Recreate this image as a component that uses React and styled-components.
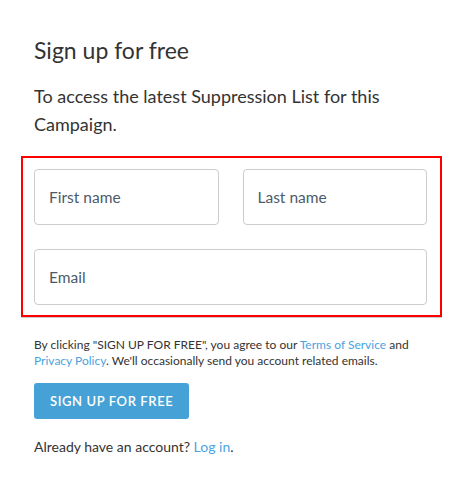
import React from "react";
import styled, { createGlobalStyle } from "styled-components";

const GlobalStyle = createGlobalStyle`
  body {
    margin: 0;
    background: #fff;
    font-family: "Source Sans Pro", Lato, "Liberation Sans", sans-serif;
    color: #333;
  }
`;

const Page = styled.div`
  width: 393px;
  padding: 35px 37px 30px 34px;
`;

const Title = styled.h1`
  margin: 0;
  font-size: 23px;
  font-weight: 400;
  line-height: 30px;
  color: #333;
`;

const Intro = styled.p`
  margin: 17px 0 0;
  font-size: 18px;
  line-height: 28px;
  color: #333;
`;

const FormBox = styled.div`
  margin: 18px -15px 0 -13px;
  padding: 11px 13px 10px 11px;
  border: 2px solid #ff0000;
  box-shadow: 0 1px 0 #ccc;
  display: flex;
  flex-direction: column;
  gap: 24px;
`;

const Row = styled.div`
  display: flex;
  gap: 24px;
`;

const Input = styled.input`
  flex: ${(p) => (p.$grow ? 1 : "none")};
  width: 100%;
  min-width: 0;
  height: 56px;
  box-sizing: border-box;
  padding: 0 14px;
  border: 1px solid #ccc;
  border-radius: 4px;
  font-family: inherit;
  font-size: 15.5px;
  color: #333;
  background: #fff;

  &::placeholder {
    color: #4b5b6b;
    opacity: 1;
  }

  &:focus {
    outline: none;
    border-color: #46a2d6;
  }
`;

const Terms = styled.p`
  margin: 20px 0 0;
  font-size: 12px;
  line-height: 16px;
  color: #333;
`;

const Link = styled.a`
  color: #4aa3df;
  text-decoration: none;
`;

const SubmitButton = styled.button`
  margin-top: 14px;
  height: 36px;
  padding: 0 16px;
  border: none;
  border-radius: 3px;
  background: #46a2d6;
  color: #fff;
  font-family: inherit;
  font-size: 13px;
  font-weight: 600;
  letter-spacing: 0.6px;
  cursor: pointer;
`;

const LoginLine = styled.p`
  margin: 18px 0 0;
  font-size: 14px;
  line-height: 20px;
  color: #333;
`;

export default function App() {
  return (
    <>
      <GlobalStyle />
      <Page>
        <Title>Sign up for free</Title>
        <Intro>To access the latest Suppression List for this Campaign.</Intro>
        <FormBox>
          <Row>
            <Input $grow placeholder="First name" />
            <Input $grow placeholder="Last name" />
          </Row>
          <Input type="email" placeholder="Email" />
        </FormBox>
        <Terms>
          By clicking "SIGN UP FOR FREE", you agree to our{" "}
          <Link href="#">Terms of Service</Link> and{" "}
          <Link href="#">Privacy Policy</Link>. We'll occasionally send you
          account related emails.
        </Terms>
        <SubmitButton>SIGN UP FOR FREE</SubmitButton>
        <LoginLine>
          Already have an account? <Link href="#">Log in</Link>.
        </LoginLine>
      </Page>
    </>
  );
}
